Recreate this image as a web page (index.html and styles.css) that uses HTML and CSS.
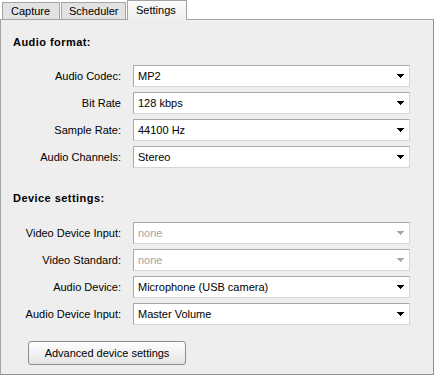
FILE: index.html
```html
<!DOCTYPE html>
<html>
<head>
<meta charset="utf-8">
<link rel="stylesheet" href="styles.css">
</head>
<body>
<div class="window">
  <div class="tabs">
    <div class="tab tab-capture">Capture</div>
    <div class="tab tab-scheduler">Scheduler</div>
    <div class="tab tab-settings active">Settings</div>
  </div>
  <div class="panel">
    <div class="heading">Audio format:</div>
    <div class="rows">
      <div class="row"><span class="label">Audio Codec:</span><div class="combo"><span class="value">MP2</span><svg class="arrow" width="7" height="4" viewBox="0 0 7 4"><polygon points="0,0 7,0 3.5,4"/></svg></div></div>
      <div class="row"><span class="label">Bit Rate</span><div class="combo"><span class="value">128 kbps</span><svg class="arrow" width="7" height="4" viewBox="0 0 7 4"><polygon points="0,0 7,0 3.5,4"/></svg></div></div>
      <div class="row"><span class="label">Sample Rate:</span><div class="combo"><span class="value">44100 Hz</span><svg class="arrow" width="7" height="4" viewBox="0 0 7 4"><polygon points="0,0 7,0 3.5,4"/></svg></div></div>
      <div class="row"><span class="label">Audio Channels:</span><div class="combo"><span class="value">Stereo</span><svg class="arrow" width="7" height="4" viewBox="0 0 7 4"><polygon points="0,0 7,0 3.5,4"/></svg></div></div>
    </div>
    <div class="heading heading-device">Device settings:</div>
    <div class="rows">
      <div class="row"><span class="label">Video Device Input:</span><div class="combo disabled"><span class="value">none</span><svg class="arrow" width="7" height="4" viewBox="0 0 7 4"><polygon points="0,0 7,0 3.5,4"/></svg></div></div>
      <div class="row"><span class="label">Video Standard:</span><div class="combo disabled"><span class="value">none</span><svg class="arrow" width="7" height="4" viewBox="0 0 7 4"><polygon points="0,0 7,0 3.5,4"/></svg></div></div>
      <div class="row"><span class="label">Audio Device:</span><div class="combo"><span class="value">Microphone (USB camera)</span><svg class="arrow" width="7" height="4" viewBox="0 0 7 4"><polygon points="0,0 7,0 3.5,4"/></svg></div></div>
      <div class="row"><span class="label">Audio Device Input:</span><div class="combo"><span class="value">Master Volume</span><svg class="arrow" width="7" height="4" viewBox="0 0 7 4"><polygon points="0,0 7,0 3.5,4"/></svg></div></div>
    </div>
    <div class="actions">
      <button class="button" type="button">Advanced device settings</button>
    </div>
  </div>
</div>
</body>
</html>
```

FILE: styles.css
```css
html, body {
  margin: 0;
  padding: 0;
  background: #ffffff;
}

body {
  font-family: "Liberation Sans", Arial, sans-serif;
  font-size: 11px;
  color: #000000;
}

.window {
  width: 434px;
}

.tabs {
  display: flex;
  align-items: flex-end;
  height: 19px;
  padding-left: 2px;
}

.tab {
  box-sizing: border-box;
  height: 17px;
  border: 1px solid #a3a3a3;
  border-bottom: none;
  background: #e2e2e2;
  padding-left: 8px;
  line-height: 16px;
  white-space: nowrap;
}

.tab-capture {
  width: 58px;
  margin-right: 1px;
}

.tab-scheduler {
  width: 65px;
  padding-left: 7px;
}

.tab-settings {
  width: 60px;
  margin-left: 1px;
  padding-left: 8px;
}

.tab.active {
  position: relative;
  z-index: 1;
  height: 20px;
  margin-bottom: -1px;
  background: linear-gradient(#fafafa, #eeeeee);
  line-height: 16px;
  padding-top: 1px;
}

.panel {
  box-sizing: border-box;
  height: 356px;
  border: 1px solid #a5a5a5;
  border-right-color: #8e8e8e;
  border-bottom-color: #8e8e8e;
  background: #eeeeee;
  padding-top: 15px;
}

.heading {
  font-weight: bold;
  line-height: 14px;
  padding-left: 12px;
  margin-bottom: 16px;
  letter-spacing: 0.45px;
}

.heading-device {
  margin-top: 23px;
  margin-bottom: 17px;
}

.rows {
  display: flex;
  flex-direction: column;
  gap: 5px;
}

.row {
  display: flex;
  align-items: center;
  gap: 12px;
}

.label {
  width: 120px;
  text-align: right;
  white-space: nowrap;
}

.combo {
  box-sizing: border-box;
  width: 277px;
  height: 22px;
  background: #ffffff;
  border: 1px solid;
  border-color: #a9a9a9 #d6d6d6 #d6d6d6 #a9a9a9;
  display: flex;
  align-items: center;
  justify-content: space-between;
  padding-left: 4px;
  padding-right: 5px;
}

.value {
  white-space: nowrap;
}

.arrow {
  display: block;
  fill: #000000;
  shape-rendering: crispEdges;
}

.combo.disabled .value {
  color: #a3a3a3;
}

.combo.disabled .arrow {
  fill: #a8a8a8;
}

.actions {
  padding-left: 27px;
  margin-top: 16px;
}

.button {
  box-sizing: border-box;
  width: 158px;
  height: 24px;
  border: 1px solid #8c8c8c;
  border-radius: 3px;
  background: linear-gradient(#fdfdfd, #f2f2f2 50%, #e3e3e3);
  font-family: "Liberation Sans", Arial, sans-serif;
  font-size: 11px;
  color: #000000;
  padding: 0;
}
```
